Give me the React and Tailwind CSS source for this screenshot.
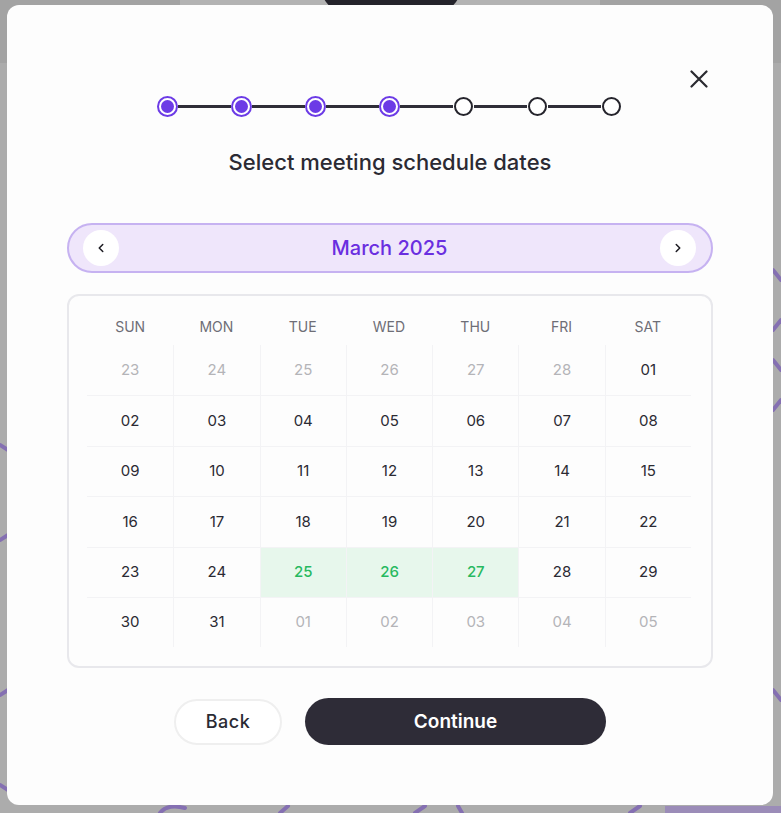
import React from "react";
import { ChevronLeft, ChevronRight } from "lucide-react";

const rows = [
  [["23", "m"], ["24", "m"], ["25", "m"], ["26", "m"], ["27", "m"], ["28", "m"], ["01", ""]],
  [["02", ""], ["03", ""], ["04", ""], ["05", ""], ["06", ""], ["07", ""], ["08", ""]],
  [["09", ""], ["10", ""], ["11", ""], ["12", ""], ["13", ""], ["14", ""], ["15", ""]],
  [["16", ""], ["17", ""], ["18", ""], ["19", ""], ["20", ""], ["21", ""], ["22", ""]],
  [["23", ""], ["24", ""], ["25", "s"], ["26", "s"], ["27", "s"], ["28", ""], ["29", ""]],
  [["30", ""], ["31", ""], ["01", "m"], ["02", "m"], ["03", "m"], ["04", "m"], ["05", "m"]],
];

const days = ["SUN", "MON", "TUE", "WED", "THU", "FRI", "SAT"];

function Step({ done }) {
  if (done) {
    return (
      <div className="w-[21px] h-[21px] rounded-full border-2 border-[#6c3be6] bg-white flex items-center justify-center shrink-0">
        <div className="w-[13px] h-[13px] rounded-full bg-[#6c3be6]" />
      </div>
    );
  }
  return (
    <div className="w-[21px] h-[21px] flex items-center justify-center shrink-0">
      <div className="w-[19px] h-[19px] rounded-full border-2 border-[#25242c] bg-white" />
    </div>
  );
}

function Line() {
  return <div className="w-[53px] h-[3px] bg-[#2f2e38]" />;
}

export default function App() {
  const steps = [true, true, true, true, false, false, false];
  return (
    <div
      className="relative w-[781px] h-[813px] overflow-hidden bg-[#acacac]"
      style={{ fontFamily: "Inter, 'Noto Sans', sans-serif" }}
    >
      <svg className="absolute left-0 top-0" width="781" height="813" viewBox="0 0 781 813">
        <rect x="0" y="0" width="781" height="63" fill="#a3a3a3" />
        <rect x="180" y="0" width="420" height="63" fill="#b3b3b3" />
        <rect x="322" y="-30" width="138" height="40" rx="20" fill="#24232b" />
        <g fill="none" stroke="#8570b2" strokeWidth="4" strokeLinecap="round">
          <path d="M0 445 L 8 450" />
          <path d="M0 540 L 8 535" />
          <path d="M0 695 L 8 690" />
          <path d="M0 785 L 8 790" />
          <path d="M773 270 L 781 280" />
          <path d="M773 330 L 781 320" />
          <path d="M773 360 L 781 370" />
          <path d="M773 410 L 781 400" />
          <path d="M773 690 L 781 700" />
          <path d="M160 813 C 165 806, 175 805, 185 808" />
          <path d="M280 813 L 288 806" />
          <path d="M415 813 L 425 806" />
          <path d="M458 806 L 462 813" />
          <path d="M630 813 L 640 806" />
        </g>
        <rect x="665" y="806" width="116" height="7" fill="#9b8cb8" />
      </svg>

      <div className="relative z-10 mt-[5px] ml-[7px] w-[766px] h-[800px] rounded-[12px] bg-[#fdfdfd] px-[60px]">
        <button className="absolute top-[65px] right-[65px] w-[18px] h-[18px] flex items-center justify-center">
          <svg width="18" height="18" viewBox="0 0 18 18">
            <path d="M1.5 1.5 L16.5 16.5 M16.5 1.5 L1.5 16.5" stroke="#2a2a30" strokeWidth="2.2" strokeLinecap="round" />
          </svg>
        </button>

        <div className="pt-[91px] pr-[2px] flex justify-center items-center">
          {steps.map((d, i) => (
            <React.Fragment key={i}>
              {i > 0 && <Line />}
              <Step done={d} />
            </React.Fragment>
          ))}
        </div>

        <h2 className="mt-[30px] text-center text-[22px] leading-[30px] font-medium text-[#2b2a33]">
          Select meeting schedule dates
        </h2>

        <div className="mt-[46px] h-[50px] rounded-full border-2 border-[#c6b2f1] bg-[#efe6fb] flex items-center justify-between pl-[14px] pr-[15px]">
          <button className="w-[36px] h-[36px] rounded-full bg-white flex items-center justify-center text-[#1e1d24]">
            <ChevronLeft size={14} strokeWidth={2.6} />
          </button>
          <span className="text-[20px] font-medium text-[#6a2ee0]">March 2025</span>
          <button className="w-[36px] h-[36px] rounded-full bg-white flex items-center justify-center text-[#1e1d24]">
            <ChevronRight size={14} strokeWidth={2.6} />
          </button>
        </div>

        <div className="mt-[21px] rounded-[12px] border-2 border-[#e8e8ec] pl-[18px] pr-[20px] pt-[11px] pb-[19px]">
          <div className="grid grid-cols-7 h-[38px] items-center">
            {days.map((d) => (
              <div key={d} className="text-center text-[14px] font-normal text-[#6e6e76]">
                {d}
              </div>
            ))}
          </div>
          <div>
            {rows.map((r, ri) => (
              <div
                key={ri}
                className={`grid grid-cols-7 h-[50.4px] ${ri > 0 ? "border-t border-[#f3f3f5]" : ""}`}
              >
                {r.map(([n, t], ci) => (
                  <div
                    key={ci}
                    className={`flex items-center justify-center text-[15px] ${ci > 0 ? "border-l border-[#f3f3f5]" : ""} ${
                      t === "s"
                        ? "bg-[#e7f7ec] text-[#27b960] font-medium"
                        : t === "m"
                        ? "text-[#b4b4b8]"
                        : "text-[#2b2a33]"
                    }`}
                  >
                    {n}
                  </div>
                ))}
              </div>
            ))}
          </div>
        </div>

        <div className="mt-[30px] flex justify-center items-center gap-[23px]">
          <button className="w-[108px] h-[46px] rounded-full border-2 border-[#efefef] bg-white text-[18px] font-medium tracking-wide text-[#2a2a33]">
            Back
          </button>
          <button className="w-[301px] h-[47px] rounded-full bg-[#2e2c37] text-[19px] font-semibold text-white">
            Continue
          </button>
        </div>
      </div>
    </div>
  );
}
